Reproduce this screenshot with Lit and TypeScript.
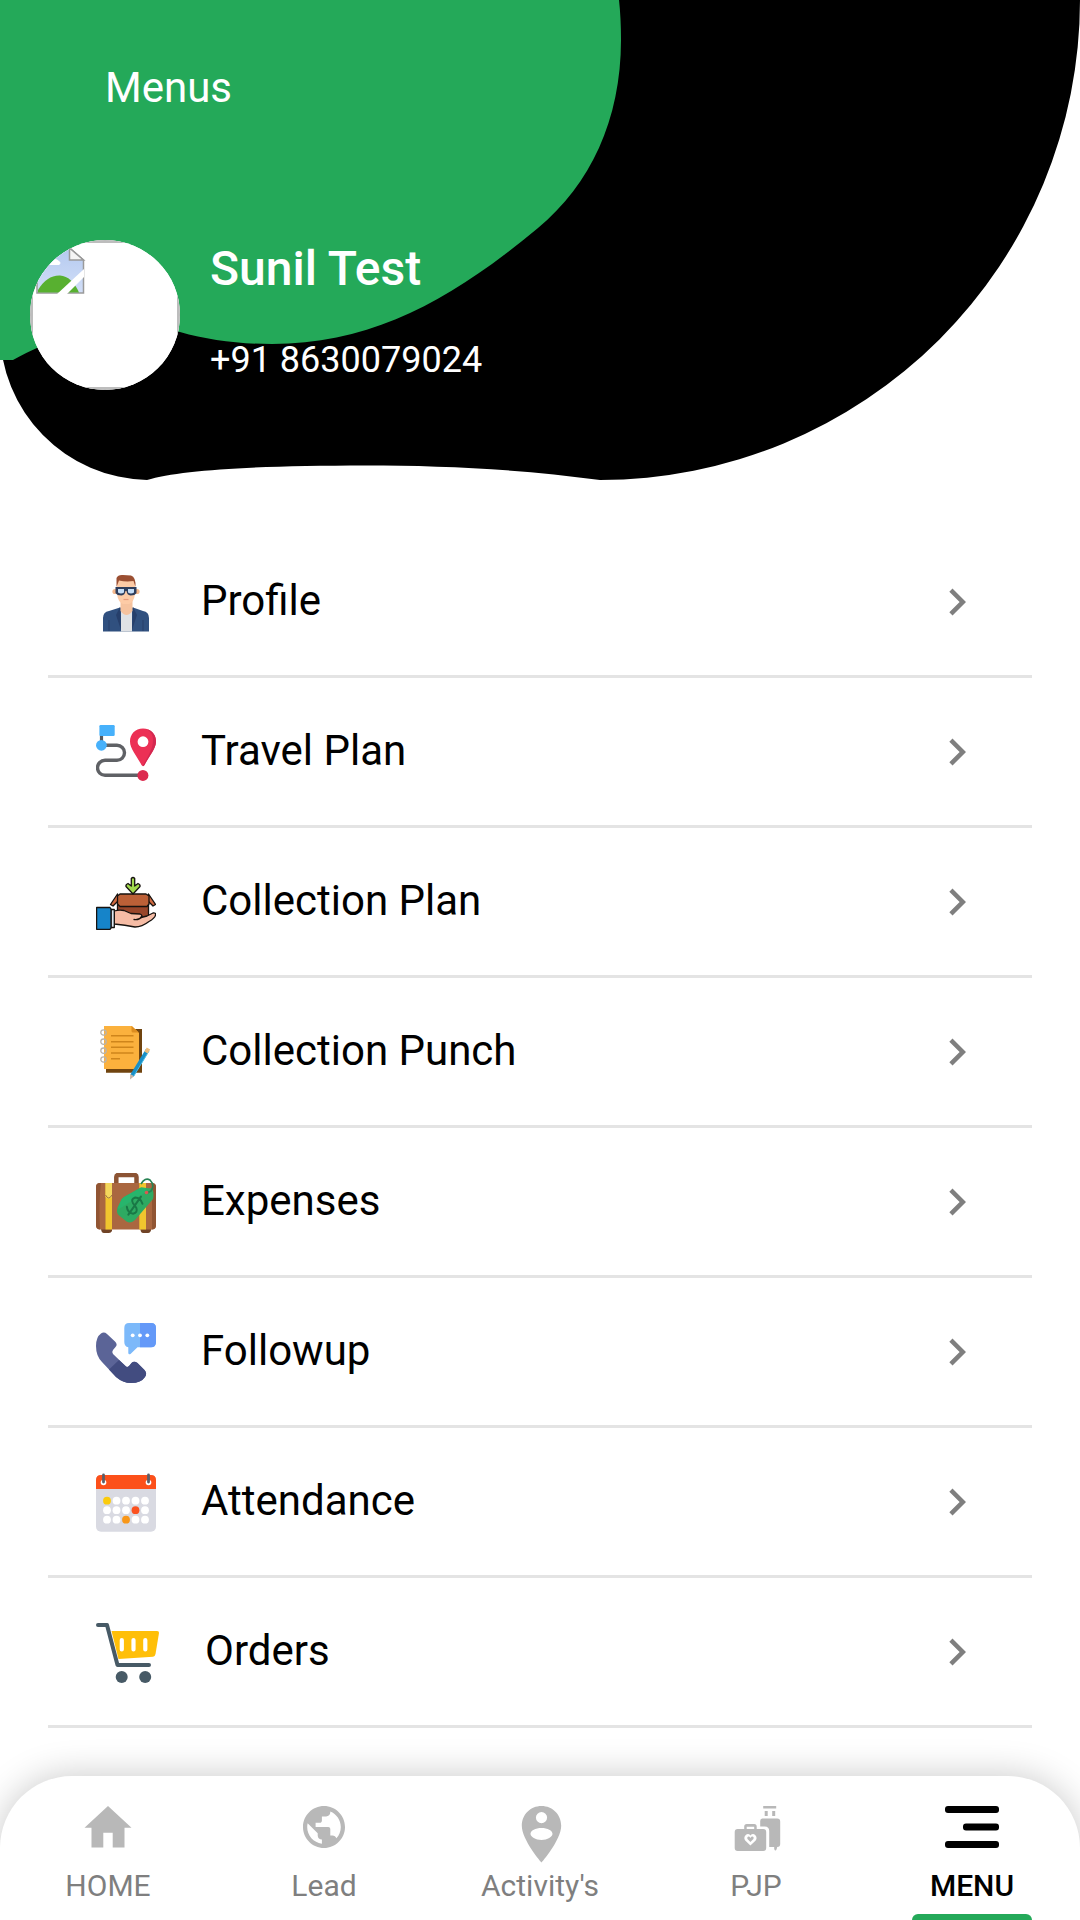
import { LitElement, html, css, svg, TemplateResult } from "lit";
import { customElement, property } from "lit/decorators.js";

interface Entry {
  label: string;
  href: string;
  art: TemplateResult;
  width?: number;
}

const profileArt = svg`
  <path d="M7 58.500V45Q7 39 13 38L24 34.500H37L47 38Q53 39 53 45V58.500Z" fill="#30507f"/>
  <path d="M13 47V58M47 47V58" stroke="#263f6a" stroke-width="1"/>
  <path d="M25 36H36V58.500H25Z" fill="#e0e2e5"/>
  <path d="M24 34L20 42L25 57ZM37 34L41 42L36 57Z" fill="#263f6b"/>
  <path d="M24.500 26H36.500V38Q30.500 46 24.500 38Z" fill="#f6c39f"/>
  <circle cx="19" cy="18.500" r="2.600" fill="#f4b88d"/>
  <circle cx="41" cy="18.500" r="2.600" fill="#f4b88d"/>
  <path d="M21 7H39V21Q38 29 33 31H27Q22 29 21 21Z" fill="#fdcba6"/>
  <path d="M20.500 14V5Q22 1.500 27 2L35 2.500Q40 4 39.500 14L37.500 8Q30 9 23 7.500Z" fill="#9b4f32"/>
  <path d="M19.500 14H40.500V20Q39 22.500 34.500 22.500Q31 22 30.500 18H29.500Q29 22 25.500 22.500Q21 22.500 19.500 20Z" fill="#2f3e5c"/>
  <path d="M22 16H28V19.500Q25 21.500 22 19.500ZM32 16H38V19.500Q35 21.500 32 19.500Z" fill="#c4ddf7"/>
  <path d="M27.500 26.500H32.500" stroke="#e79b7e" stroke-width="1.200"/>`;

const travelArt = svg`
  <path d="M10 22.300H21A7.400 7.400 0 0 1 21 37.300H9A7.500 7.500 0 0 0 9 52.300H46" fill="none" stroke="#5f6165" stroke-width="3.400"/>
  <path d="M5.500 12V20" stroke="#57595d" stroke-width="3.200"/>
  <rect x="3.400" y="2" width="15.300" height="11" rx="1.200" fill="#47b1fb"/>
  <circle cx="5.400" cy="22.300" r="5.400" fill="#47b1fb"/>
  <circle cx="46.900" cy="52.400" r="5.500" fill="#dc2b4f"/>
  <path d="M47 5.600C39 5.600 34 11.500 34 18.500C34 26 41 33 45.500 42Q47 44 48.500 42C53 33 60 26 60 18.500C60 11.500 55 5.600 47 5.600Z" fill="#ec3055"/>
  <path d="M51 6.300C57 8 60 13 60 18.500C60 26 53 33 48.500 42Q47.800 43.500 46.500 43C53 32 57 25 57 17Q57 10 51 6.300Z" fill="#d32850"/>
  <circle cx="47" cy="18.700" r="5.400" fill="#fff"/>`;

const collectionArt = svg`
  <g stroke="#17120f" stroke-width="1.300" stroke-linejoin="round" stroke-linecap="round">
    <path d="M21.500 30H52.500V45H21.500Z" fill="#99462a"/>
    <path d="M21.500 21L14.500 31.500L17 33L23 27ZM52.500 21L59.500 31.500L57 33L51 27Z" fill="#cf6940"/>
    <path d="M24 21H50L53 23V31L51 33.500H24L21.500 31V23Z" fill="#bc6037"/>
    <path d="M35.300 5.500Q37 3.500 38.700 5.500V13L42 10.500Q44.500 11.500 44 13.500L37 21L30 13.500Q29.500 11.500 32 10.500L35.300 13Z" fill="#a0d94e"/>
    <path d="M18.300 38Q23 36.500 28 37.500L35 40.500L44 41Q47 42 45 44.500L51 43L57 40Q60 39.500 59.500 42Q59 45 53 48.500Q46 54 39 54Q29 52 18.300 51Z" fill="#f6bca5"/>
    <path d="M38 46.500Q43 47.500 46 43.500" fill="none"/>
    <path d="M15 36.500H18.300V54.500H15Z" fill="#dce8f2"/>
    <path d="M.600 34.500H14L15 36V55L14 56.300H.600Z" fill="#1684c9"/>
  </g>`;

const punchArt = svg`
  <path d="M10 6H46V49.700H10Z" fill="#70440f"/>
  <path d="M8 3H36L43 10V46H8Z" fill="#fbb13d"/>
  <path d="M35.500 3L43 9.500H37Q35.500 9.500 35.500 8Z" fill="#dd8d20"/>
  <path d="M15 12.700H37.500M15 18.700H37.500M15 24.300H37.500M15 30H37.500M15 35.700H24" stroke="#cf851b" stroke-width="1.600"/>
  <g fill="none" stroke="#b9b3aa" stroke-width="1.300">
    <circle cx="7.500" cy="9.500" r="2.700"/><circle cx="7.500" cy="18.700" r="2.700"/>
    <circle cx="7.500" cy="27.700" r="2.700"/><circle cx="7.500" cy="36.500" r="2.700"/>
  </g>
  <path d="M51.500 27L36 52.500" stroke="#198fc7" stroke-width="3.800"/>
  <path d="M53 28L37.500 53.500" stroke="#4cbbe3" stroke-width="1"/>
  <path d="M52.500 25.500L50 29.500" stroke="#efbe7c" stroke-width="4"/>
  <path d="M34.200 51L38 53.300L34 56.500Z" fill="#c5b5a8"/>`;

const expensesArt = svg`
  <path d="M20.300 11V4Q20.300 2 22.300 2H38.500Q40.500 2 40.500 4V11" fill="none" stroke="#8c5434" stroke-width="4.500"/>
  <path d="M5 55H16V58Q15 60 13 60H8Q5 60 5 55ZM44.500 55H55.500Q55 60 52 60H47Q45 60 44.500 57Z" fill="#704326"/>
  <rect x="0" y="10" width="60" height="46.500" rx="4" fill="#aa6740"/>
  <path d="M4 10H5Q2.500 30 4 56.500Q0 56 0 52V14Q0 10 4 10ZM56 10Q60 10 60 14V52Q60 56 56 56.500Z" fill="#915533"/>
  <path d="M9.500 10H16V56.500H9.500ZM43.300 10H50V56.500H43.300Z" fill="#f1c52e"/>
  <path d="M9.500 10H16V24Q12.700 27 9.500 24Z" fill="#f4d75d"/>
  <path d="M9.500 22Q12.700 28 16 22" fill="none" stroke="#9f753c" stroke-width="1"/>
  <path d="M45 14.500L56 15.500Q58.500 20 57 26L39 47Q35 51 30.500 48.500L22.500 42Q20 39 21.500 35L25.500 26.500Q26.500 25 28 24Z" fill="#2eaa62"/>
  <path d="M25.500 26.500Q26.500 25 28 24L45 14.500L49.500 15L50 19L23 36L21.500 35Z" fill="#27b56c"/>
  <path d="M45 11Q49 4 54 7Q59 12 55 18L51 20" fill="none" stroke="#278153" stroke-width="1.700"/>
  <circle cx="50.500" cy="19.500" r="1.800" fill="#db5852"/>
  <g transform="rotate(35 38.500 32.500)" fill="none" stroke="#197846" stroke-width="2" stroke-linecap="round">
    <path d="M44 26.500Q39 22.500 34.500 25.500Q31.500 29.500 36 31.500L41.500 33.500Q45.500 36.500 42 40Q37 42.500 33 38M38.700 21.500V43.500"/>
  </g>`;

const followupArt = svg`
  <path d="M33 0H55Q60 0 60 5V19Q60 24.300 55 24.300H41.500L34.500 31Q32.500 32 32.300 30V24.300Q28.300 23.500 28.300 19V5Q28.300 0 33 0Z" fill="#7cb9fa"/>
  <path d="M44 0H55Q60 0 60 5V19Q60 24.300 55 24.300H44Z" fill="#6499f8"/>
  <circle cx="36.700" cy="12.300" r="1.900" fill="#fff"/><circle cx="44" cy="12.300" r="1.900" fill="#fff"/><circle cx="51.300" cy="12.300" r="1.900" fill="#fff"/>
  <path d="M5 10.500Q8 8.500 11 11L19 18.500Q22 21.500 19.500 24L17 27Q15.500 29 17 31L29.500 43Q31.500 45 33.500 42.500L35.500 40Q38 37.500 41.500 40L48.500 47Q51.500 50.500 49 54Q45 60 35 60Q27 60 20 54L6 39Q0 33 0 23Q0 14 5 10.500Z" fill="#5b6497"/>
  <path d="M23 37L29.500 43Q31.500 45 33.500 42.500L35.500 40Q38 37.500 41.500 40L48.500 47Q51.500 50.500 49 54Q45 60 35 60Q27 60 20 54L13 46.500Z" fill="#424c80"/>`;

const dotColumns = [11, 20.5, 30, 39.5, 49];
const dotRows = [27.7, 37.2, 46.7];
const dotColors: Record<string, string> = { "0-0": "#fbcb0c", "1-3": "#fb5220", "2-2": "#f89719" };

const attendanceArt = svg`
  <rect x="0" y="2" width="60" height="56.700" rx="5" fill="#d9dae2"/>
  <path d="M0 16V7Q0 2 5 2H55Q60 2 60 7V16Z" fill="#fc501a"/>
  <circle cx="7.500" cy="9.500" r="2.800" fill="#fff"/><circle cx="52.500" cy="9.500" r="2.800" fill="#fff"/>
  <path d="M7.500 2V9M52.500 2V9" stroke="#5c5e68" stroke-width="2.800" stroke-linecap="round"/>
  ${dotRows.map((y, r) => dotColumns.map((x, c) => svg`<circle cx=${x} cy=${y} r="3.900" fill=${dotColors[`${r}-${c}`] ?? "#fff"}/>`))}`;

const ordersArt = svg`
  <path d="M15.500 8H61Q63.300 8 63 10L59.500 31Q59 33.500 57 33.700L22.500 36Z" fill="#ffbf08"/>
  <path d="M25.800 17V26.500M37.500 17V26.500M49.300 17V26.500" stroke="#fff" stroke-width="4.200" stroke-linecap="round"/>
  <path d="M2 2H11L21.500 42H53" fill="none" stroke="#475a66" stroke-width="4" stroke-linecap="round" stroke-linejoin="round"/>
  <circle cx="25.700" cy="54" r="6" fill="#475a66"/><circle cx="49.200" cy="54" r="6" fill="#475a66"/>`;

const entries: Entry[] = [
  { label: "Profile", href: "#profile", art: profileArt },
  { label: "Travel Plan", href: "#travel-plan", art: travelArt },
  { label: "Collection Plan", href: "#collection-plan", art: collectionArt },
  { label: "Collection Punch", href: "#collection-punch", art: punchArt },
  { label: "Expenses", href: "#expenses", art: expensesArt },
  { label: "Followup", href: "#followup", art: followupArt },
  { label: "Attendance", href: "#attendance", art: attendanceArt },
  { label: "Orders", href: "#orders", art: ordersArt, width: 64 },
];

/* Tab art is drawn in a 60 x 60 box whose visible part starts at the top edge. */
const tabs: Entry[] = [
  {
    label: "HOME",
    href: "#home",
    art: svg`<path d="M25.300 41.500V26.800H34.700V41.500H46.500V21.800H53.500L30 0L6.500 21.800H13.500V41.500Z"/>`,
  },
  {
    label: "Lead",
    href: "#lead",
    art: svg`<path transform="translate(4.800 -4.200) scale(2.100)" d="M12 2C6.480 2 2 6.480 2 12s4.480 10 10 10 10-4.480 10-10S17.520 2 12 2zm-1 17.930c-3.950-.49-7-3.850-7-7.930 0-.62.080-1.210.210-1.790L9 15v1c0 1.100.9 2 2 2v1.930zm6.900-2.540c-.26-.81-1-1.390-1.900-1.390h-1v-3c0-.55-.45-1-1-1H8v-2h2c.55 0 1-.45 1-1V7h2c1.100 0 2-.9 2-2v-.41c2.930 1.190 5 4.060 5 7.410 0 2.080-.8 3.970-2.100 5.390z"/>`,
  },
  {
    label: "Activity's",
    href: "#activity",
    art: svg`<path transform="translate(1.500 0)" fill-rule="evenodd" d="M30 0C19 0 10.300 8.500 10.300 19.700C10.300 34 30 56.500 30 56.500S49.700 34 49.700 19.700C49.700 8.500 41 0 30 0ZM30 6A5.600 5.600 0 1 1 30 17.200A5.600 5.600 0 1 1 30 6ZM30 34C24 34 19 31 19 27.800S24 22 30 22S41 24.600 41 27.800S36 34 30 34Z"/>`,
  },
  {
    label: "PJP",
    href: "#pjp",
    art: svg`
      <g transform="translate(1.200 0)">
        <path d="M36 0H49V2.500H36ZM37.500 5H40.500V10H37.500ZM45 5H48V10H45Z"/>
        <path d="M35 12.500H50Q53 12.500 53 15.500V38Q53 41 50 41L49.500 43Q48.200 46 47 43V41H42V25Q42 20.500 37.500 20.500H33V15Q33 12.500 35 12.500Z"/>
        <path fill-rule="evenodd" d="M10.500 23H17V20.500Q17 18 19.500 18H27Q29.500 18 29.500 20.500V23H36Q39 23 39 26V42Q39 45 36 45H10.500Q7.500 45 7.500 42V26Q7.500 23 10.500 23ZM19.500 23H27V20.700H19.500ZM23.200 39.500L18 34.500Q16 31.500 18.500 29Q21.200 27 23.200 29.500Q25.500 27 28 29Q30.500 31.500 28.500 34.500Z"/>
        <path d="M23.200 36L20.300 33Q19.500 31.500 20.700 30.800Q22 30 23.200 32Q24.500 30 25.900 30.800Q27 31.500 26.200 33Z"/>
      </g>`,
  },
  {
    label: "MENU",
    href: "#menu",
    art: svg`<rect x="3" y="0" width="54" height="7" rx="3"/><rect x="21" y="17.500" width="36" height="7" rx="3"/><rect x="3" y="35" width="54" height="7" rx="3"/>`,
  },
];

@customElement("profile-header")
class ProfileHeader extends LitElement {
  static styles = css`
    :host {
      display: grid;
      color: #fff;
    }
    .backdrop,
    .content {
      grid-area: 1 / 1;
    }
    .backdrop {
      display: block;
      width: 100%;
      height: 480px;
    }
    .content {
      padding: 63px 30px 90px;
    }
    .title {
      margin: 0 0 127px;
      padding-left: 75px;
      font-size: 42px;
      line-height: 50px;
      font-weight: 400;
    }
    .person {
      display: flex;
      gap: 30px;
    }
    .avatar {
      flex: none;
      box-sizing: border-box;
      width: 150px;
      height: 150px;
      border-radius: 50%;
      overflow: hidden;
      background: #fff;
    }
    .avatar-art {
      display: block;
    }
    .details {
      display: flex;
      flex-direction: column;
      gap: 40px;
    }
    .name,
    .phone {
      margin: 0;
    }
    .name {
      font-size: 48px;
      line-height: 58px;
      font-weight: 500;
    }
    .phone {
      font-size: 36px;
      line-height: 44px;
    }
  `;

  render() {
    return html`
      <svg class="backdrop" viewBox="0 0 1080 480" preserveAspectRatio="none" aria-hidden="true">
        <path d="M0 0H1080A480 480 0 0 1 600 480C520 469 440 465.500 366 465.500C255 465.500 180 470 147 480A150 150 0 0 1 0 330Z" fill="#000" />
        <path d="M0 0H619Q621 18 621 40C621 120 590 185 538 228C456 296 376 344 272 344C238 344 208 340 180 332C120 316 60 334 13 360H0Z" fill="#24a959" />
      </svg>
      <div class="content">
        <h1 class="title">Menus</h1>
        <div class="person">
          <div class="avatar">
            <svg class="avatar-art" width="150" height="150" viewBox="0 0 150 150" role="img" aria-label="Profile photo">
              <defs>
                <linearGradient id="sky" x1="0" y1="0" x2="0" y2="1">
                  <stop offset="0" stop-color="#b4c9ef" />
                  <stop offset="1" stop-color="#d2dff8" />
                </linearGradient>
              </defs>
              <rect x="1.500" y="1.500" width="147" height="147" fill="#fff" stroke="#bdbdbd" stroke-width="3" />
              <path d="M7 8H39.500L53.500 20V53H7Z" fill="url(#sky)" stroke="#9a9a9a" stroke-width="1.500" />
              <path d="M16 25Q18 20 22 21Q25 17 29 21Q32 23 29 25Z" fill="#fff" />
              <path d="M8 52.500V50Q17 35 30 35.500Q42 36.500 49 52.500Z" fill="#58b030" />
              <path d="M26 55L54 29V37L36 55Z" fill="#fff" />
              <path d="M39.500 8V20H53.500Z" fill="#f5f5f5" stroke="#999" stroke-width="1.500" />
            </svg>
          </div>
          <div class="details">
            <h2 class="name">Sunil Test</h2>
            <p class="phone">+91 8630079024</p>
          </div>
        </div>
      </div>
    `;
  }
}

@customElement("menu-list")
class MenuList extends LitElement {
  static styles = css`
    :host {
      display: block;
      padding: 48px;
    }
    .list {
      list-style: none;
      margin: 0;
      padding: 0;
    }
    .item {
      border-bottom: 3px solid #e4e4e4;
    }
    .link {
      display: flex;
      align-items: flex-start;
      padding: 45px 48px 42px;
      color: #000;
      text-decoration: none;
    }
    .icon {
      flex: none;
      margin-right: 45px;
    }
    .label {
      flex: 1;
      font-size: 42px;
      line-height: 56px;
    }
    .chevron {
      flex: none;
      height: 58px;
      fill: #7f7f7f;
    }
  `;

  render() {
    return html`
      <ul class="list">
        ${entries.map(
          ({ label, href, art, width = 60 }) => html`
            <li class="item">
              <a class="link" href=${href}>
                <svg class="icon" width=${width} height="60" viewBox="0 0 ${width} 60" aria-hidden="true">${art}</svg>
                <span class="label">${label}</span>
                <svg class="chevron" width="54" viewBox="0 0 24 24" aria-hidden="true">
                  <path d="M10 6L8.590 7.410 13.170 12l-4.580 4.590L10 18l6-6z" />
                </svg>
              </a>
            </li>
          `
        )}
      </ul>
    `;
  }
}

@customElement("tab-bar")
class TabBar extends LitElement {
  @property() current = "MENU";

  static styles = css`
    :host {
      display: block;
      position: sticky;
      bottom: 0;
    }
    .bar {
      display: grid;
      grid-template-columns: repeat(5, 1fr);
      background: #fff;
      border-radius: 72px 72px 0 0;
      box-shadow: 0 0 36px rgba(0, 0, 0, 0.22);
    }
    .tab {
      display: flex;
      flex-direction: column;
      align-items: center;
      padding-top: 30px;
      color: #7f7f7f;
      text-decoration: none;
    }
    .icon {
      fill: #b8b8b8;
    }
    .label {
      margin: 2px 0 10px;
      font-size: 30px;
      line-height: 36px;
    }
    .marker {
      width: 120px;
      height: 6px;
      border-radius: 6px 6px 0 0;
    }
    .active {
      color: #000;
      font-weight: 500;
    }
    .active .icon {
      fill: #000;
    }
    .active .marker {
      background: #24a959;
    }
  `;

  render() {
    return html`
      <nav class="bar" aria-label="Main">
        ${tabs.map(
          ({ label, href, art }) => html`
            <a class="tab ${label === this.current ? "active" : ""}" href=${href}>
              <svg class="icon" width="60" height="60" viewBox="0 0 60 60" aria-hidden="true">${art}</svg>
              <span class="label">${label}</span>
              <span class="marker"></span>
            </a>
          `
        )}
      </nav>
    `;
  }
}

@customElement("app-root")
class AppRoot extends LitElement {
  static styles = css`
    :host {
      display: flex;
      flex-direction: column;
      min-height: 100vh;
      overflow-x: clip;
      background: #fff;
      font-family: Roboto, "Liberation Sans", sans-serif;
    }
    .main {
      flex: 1;
    }
  `;

  render() {
    return html`
      <profile-header></profile-header>
      <main class="main"><menu-list></menu-list></main>
      <tab-bar current="MENU"></tab-bar>
    `;
  }
}
